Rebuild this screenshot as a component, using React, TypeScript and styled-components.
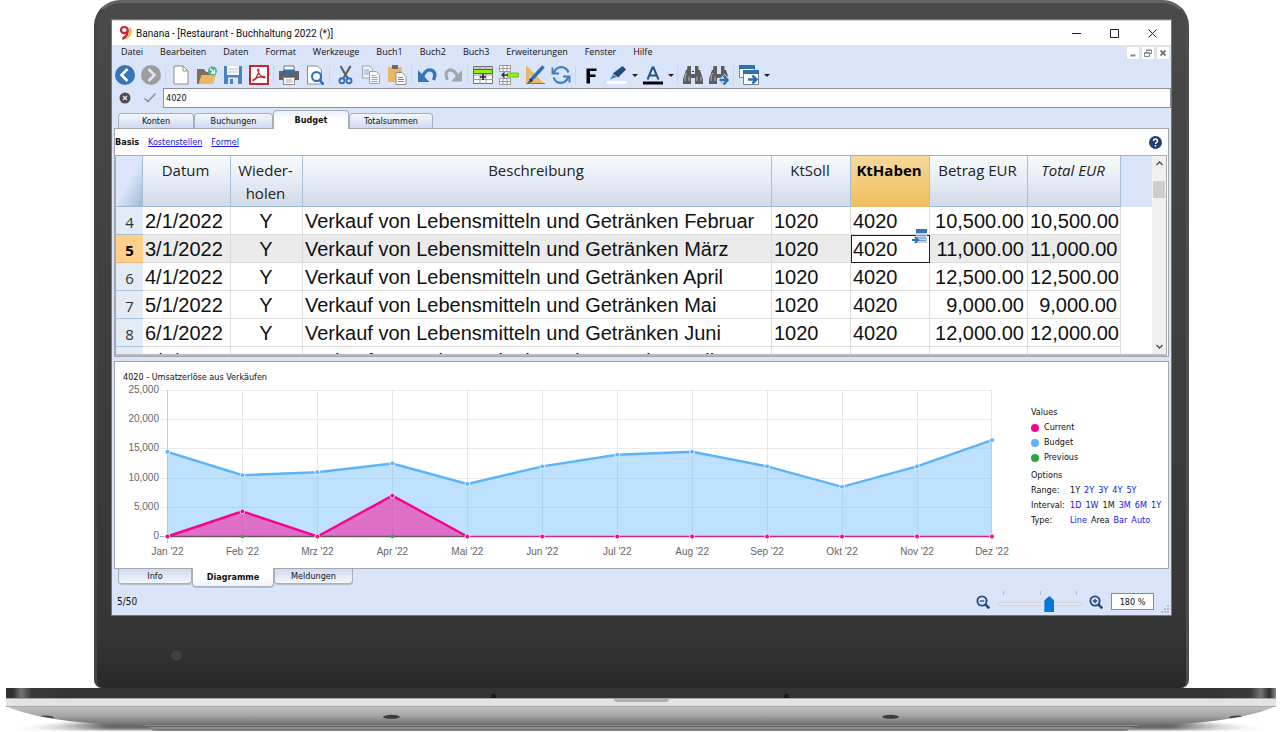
import React from "react";
import styled, { createGlobalStyle, css } from "styled-components";

const ui = `"DejaVu Sans Condensed", "DejaVu Sans", sans-serif`;
const menuFont = `"Open Sans", "Noto Sans", sans-serif`;
const arial = `"Liberation Sans", Arial, sans-serif`;
const blue = "#dae4f9";

const Global = createGlobalStyle`
  *, *::before, *::after { box-sizing: border-box; }
  body { margin: 0; background: #fff; color: #111; font: 9px/15px ${ui}; }
  button, input { font: inherit; color: inherit; margin: 0; padding: 0; }
  button { background: none; border: 0; }
  svg { display: block; flex: none; }
`;

const Laptop = styled.main`
  min-width: 1100px;
`;

const Lid = styled.div`
  margin: 0 91px 0 94px;
  padding: 17px 15px 0;
  border: 3px solid #5a5a5a;
  border-top-color: #646464;
  border-left-color: #444;
  border-right-color: #4e4e4e;
  border-bottom: 0;
  border-radius: 26px 26px 8px 8px;
  background: linear-gradient(#4a4a4a, #424242 30%, #373737 88%, #333 94%, #282828);
`;

const Chin = styled.div`
  height: 73px;
  padding: 34px 0 0 58px;
`;

const Camera = styled.div`
  width: 13px;
  height: 13px;
  border-radius: 50%;
  border: 1px solid #2c2c2c;
  background: #404040;
`;

const Screen = styled.section`
  background: ${blue};
  box-shadow: 0 0 0 1px #777;
`;

const TitleBar = styled.header`
  display: flex;
  align-items: center;
  height: 25px;
  padding-left: 6px;
  gap: 3px;
  background: #fff;
  border-top: 1px solid #d8d8d8;
`;

const AppTitle = styled.h1`
  flex: 1;
  margin: 0;
  font: 400 10px/15px Roboto, sans-serif;
`;

const WindowButtons = styled.div`
  display: flex;
`;

const WindowButton = styled.button`
  display: grid;
  place-items: center;
  width: 38px;
  height: 24px;
`;

const MenuBar = styled.nav`
  display: flex;
  align-items: flex-start;
  gap: 17px;
  height: 17px;
  padding-left: 9px;
  font-family: ${menuFont};
`;

const MenuButton = styled.button`
  line-height: 14px;
`;

const DocButtons = styled.div`
  display: flex;
  gap: 1px;
  margin: 1px 1px 0 auto;
`;

const DocButton = styled.button`
  display: grid;
  place-items: center;
  width: 14px;
  height: 14px;
  background: #fff;
  border: 1px solid #e2e2e2;
`;

const ToolBar = styled.div`
  display: flex;
  align-items: center;
  height: 26px;
`;

const ToolButton = styled.button<{ $narrow?: boolean }>`
  display: grid;
  place-items: center;
  width: ${(p) => (p.$narrow ? 10 : 26)}px;
  height: 26px;
`;

const Divider = styled.span`
  width: 1px;
  height: 20px;
  margin: 0 2px 0 1px;
  background: #d3d6dc;
`;

const FormulaBar = styled.div`
  display: flex;
  height: 20px;
`;

const FormulaButton = styled.button`
  display: grid;
  place-items: center;
  width: 25px;
  height: 20px;
`;

const FormulaInput = styled.input`
  flex: 1;
  min-width: 0;
  margin-left: 1px;
  padding: 1px 0 0 2px;
  border: 1px solid #8e9097;
  background: #fff;
  outline: 0;
`;

const TabStrip = styled.div<{ $bottom?: boolean }>`
  display: flex;
  align-items: ${(p) => (p.$bottom ? "flex-start" : "flex-end")};
  height: ${(p) => (p.$bottom ? 17 : 20)}px;
  padding-left: 6px;
`;

const Tab = styled.button<{ $w: number; $active?: boolean; $bottom?: boolean }>`
  position: relative;
  width: ${(p) => p.$w}px;
  height: ${(p) => (p.$active ? 19 : 15)}px;
  border: 1px solid #a9aeb8;
  line-height: 13px;
  ${(p) =>
    p.$bottom
      ? css`
          border-top: 0;
          border-radius: 0 0 4px 4px;
          background: linear-gradient(#cfdaf0, #f2f6fd);
          box-shadow: 0 1px 0 #b9bec8;
        `
      : css`
          border-bottom: 0;
          border-radius: 4px 4px 0 0;
          background: linear-gradient(#f4f7fd, #cfdbf3);
        `}
  ${(p) =>
    p.$active &&
    css`
      z-index: 1;
      margin-${p.$bottom ? "top" : "bottom"}: -1px;
      font-weight: 700;
      line-height: 18px;
      background: ${p.$bottom ? "linear-gradient(#fff 50%, #eef3fc)" : "linear-gradient(#eaf0fc, #fff 50%)"};
    `}
`;

const Panel = styled.section`
  margin: 0 2px;
  border: 1px solid #a3a6ab;
  background: #fff;
`;

const ViewRow = styled.div`
  display: flex;
  align-items: center;
  gap: 9px;
  height: 26px;
  padding: 1px 6px 0 0;
`;

const ViewLink = styled.a`
  color: #1414ee;
  text-decoration: underline;
`;

const HelpButton = styled.button`
  width: 13px;
  height: 13px;
  margin-left: auto;
`;

const GridFrame = styled.div`
  display: flex;
  height: 201px;
  margin-right: 1px;
  overflow: hidden;
  border: 1px solid #a9abae;
  border-bottom: 2px solid #b8b9bb;
`;

const GridArea = styled.div`
  flex: 1;
  min-width: 0;
`;

const Grid = styled.table`
  width: 100%;
  table-layout: fixed;
  border-collapse: separate;
  border-spacing: 0;
  font: 20px/25px ${arial};
  white-space: nowrap;
`;

const Head = styled.th<{ $on?: boolean; $italic?: boolean }>`
  height: 51px;
  padding: 3px 2px 0 0;
  vertical-align: top;
  font: ${(p) => (p.$on ? "700" : "400")} 15px/23px ${menuFont};
  font-style: ${(p) => (p.$italic ? "italic" : "normal")};
  white-space: normal;
  color: ${(p) => (p.$on ? "#000" : "#222")};
  background: ${(p) => (p.$on ? "linear-gradient(#f8da9c, #efbe5c)" : "linear-gradient(#f8fcfd, #d2dae8)")};
  border-right: 1px solid ${(p) => (p.$on ? "#f0b070" : "#a6bfd6")};
  border-bottom: 1px solid ${(p) => (p.$on ? "#efb878" : "#9db8d2")};
`;

const Corner = styled.td`
  background: linear-gradient(120deg, #dbe6fa 50%, #a2b9d3);
  border-right: 1px solid #a6bfd6;
  border-bottom: 1px solid #9db8d2;
`;

const Filler = styled.td<{ $head?: boolean }>`
  background: ${(p) => (p.$head ? blue : "#fff")};
`;

const RowHead = styled.th<{ $on?: boolean }>`
  height: 28px;
  padding: 4px 0 0;
  font: ${(p) => (p.$on ? "700" : "400")} 15px/23px ${menuFont};
  color: ${(p) => (p.$on ? "#000" : "#333")};
  background: ${(p) => (p.$on ? "#ffd08a" : "#e3ebf7")};
  border-bottom: 1px solid ${(p) => (p.$on ? "#f0b070" : "#a8c0da")};
`;

const Cell = styled.td<{ $align?: string; $on?: boolean }>`
  position: relative;
  height: 28px;
  padding: 2px 3px 0 2px;
  text-align: ${(p) => p.$align || "left"};
  background: ${(p) => (p.$on ? "#ebebeb" : "#fff")};
  border-right: 1px solid #dcdcdc;
  border-bottom: 1px solid #dcdcdc;
`;

const EditCell = styled(Cell)`
  padding: 1px 0 0 1px;
  background: #fff;
  border: 1px solid #222;
`;

const CellBadge = styled.button`
  position: absolute;
  top: -7px;
  right: 1px;
`;

const ScrollBar = styled.div`
  display: flex;
  flex-direction: column;
  width: 14px;
  background: #f0f0f0;
`;

const ScrollButton = styled.button`
  display: grid;
  place-items: center;
  height: 15px;
  color: #555;
`;

const ScrollTrack = styled.div`
  flex: 1;
  padding: 10px 1px 0;
`;

const ScrollThumb = styled.div`
  height: 17px;
  background: #cdcdcd;
`;

const ChartPanel = styled(Panel)`
  display: flex;
  margin-top: 4px;
`;

const ChartBody = styled.div`
  flex: 1;
  min-width: 0;
`;

const ChartTitle = styled.h2`
  margin: 0;
  padding: 8px 0 0 8px;
  height: 21px;
  font-size: 9px;
  font-weight: 400;
  line-height: 15px;
`;

const ChartSvg = styled.svg`
  width: 100%;
  height: auto;
  font: 10px ${arial};
  fill: #666;
`;

const Legend = styled.aside`
  width: 137px;
  padding-top: 43px;
`;

const LegendLine = styled.div`
  display: flex;
  align-items: center;
  height: 15px;
`;

const LegendHeading = styled(LegendLine)<{ $gap?: boolean }>`
  margin-top: ${(p) => (p.$gap ? 3 : 0)}px;
`;

const Dot = styled.span<{ $color: string }>`
  width: 8px;
  height: 8px;
  margin-right: 5px;
  border-radius: 50%;
  background: ${(p) => p.$color};
`;

const OptionName = styled.span`
  width: 39px;
`;

const Option = styled.a<{ $current?: boolean }>`
  margin-right: 4px;
  color: ${(p) => (p.$current ? "#111" : "#1414ee")};
  text-decoration: none;
`;

const StatusBar = styled.footer`
  display: flex;
  align-items: center;
  height: 29px;
  padding: 2px 1px 0 5px;
`;

const StatusText = styled.span`
  flex: 1;
  font-size: 10px;
`;

const ZoomButton = styled.button`
  width: 14px;
  height: 14px;
`;

const SliderBox = styled.div`
  width: 84px;
  margin: 0 7px 0 8px;
`;

const Ticks = styled.div`
  display: flex;
  justify-content: space-between;
  height: 5px;
  padding: 0 5px;
`;

const Tick = styled.i`
  width: 1px;
  height: 4px;
  background: #b5bac4;
`;

const Slider = styled.input`
  display: block;
  width: 100%;
  height: 16px;
  appearance: none;
  background: transparent;
  &::-webkit-slider-runnable-track {
    height: 4px;
    background: #e4e6ea;
    border: 1px solid #d3d6dc;
  }
  &::-webkit-slider-thumb {
    appearance: none;
    width: 10px;
    height: 16px;
    margin-top: -7px;
    background: #0078d7;
    clip-path: polygon(50% 0, 100% 28%, 100% 100%, 0 100%, 0 28%);
  }
`;

const ZoomInput = styled.input`
  width: 43px;
  height: 17px;
  margin: 0 7px 0 8px;
  text-align: center;
  background: #fff;
  border: 1px solid #888c94;
`;

const Base = styled.svg`
  width: 100%;
  height: 44px;
`;

/* ---------- toolbar drawings, 20 x 20 ---------- */

const icons: Record<string, React.ReactNode> = {
  back: (
    <>
      <circle cx="10" cy="10" r="10" fill="#3775b4" />
      <path d="M12.500 4 6.500 10l6 6" fill="none" stroke="#fff" strokeWidth="2.600" />
    </>
  ),
  forward: (
    <>
      <circle cx="10" cy="10" r="10" fill="#9d9d9d" />
      <path d="M7.500 4l6 6-6 6" fill="none" stroke="#dde4f2" strokeWidth="2.600" />
    </>
  ),
  file: (
    <>
      <path d="M3 1h9l5 5v13H3z" fill="#fff" stroke="#8d8d8d" />
      <path d="M12 1v5h5" fill="none" stroke="#8d8d8d" />
    </>
  ),
  folder: (
    <>
      <path d="M0 4h7l2 3h7v12H0z" fill="#7c6f60" />
      <path d="M4.500 10H19l-3 9H1.500z" fill="#ecb765" />
      <circle cx="15.500" cy="6" r="4.500" fill="#4cb48a" />
      <path d="m13 3.500 4 4M17.500 4.500V8H14" fill="none" stroke="#fff" strokeWidth="1.300" />
    </>
  ),
  save: (
    <>
      <path d="M1 1h18v18H1z" fill="#4a84c4" />
      <path d="M4 1h12v9H4z" fill="#f4f6fa" />
      <path d="M5 4h10M5 7h10" stroke="#c3c9d2" />
      <path d="M5 12.500h10V19H5z" fill="#e3e6ea" />
      <path d="M7 14h3v5H7z" fill="#4a84c4" />
    </>
  ),
  pdf: (
    <>
      <path d="M1 1h18v18H1z" fill="#fff" stroke="#c8242b" strokeWidth="2" />
      <path
        d="M4.500 15.500c2-1 5-6 5.300-10.300.1-1.600-1.300-1.400-1-.1.700 3.800 3.600 7 6.200 7.600 1.400.1 1.300-1.200-.2-1.300-3-.1-7 1.200-9.400 2.600-1.400.9-1.800 1.900-.9 1.500z"
        fill="none"
        stroke="#c8242b"
        strokeWidth="1.300"
      />
    </>
  ),
  print: (
    <>
      <path d="M5 1h10v5H5z" fill="#fff" stroke="#777" />
      <path d="M0 6h20v9h-4v-3H4v3H0z" fill="#626262" />
      <path d="M4.500 4.500h11v4h-11z" fill="#2f6fb0" />
      <path d="M4.500 12.500h11v7h-11z" fill="#fff" stroke="#888" />
      <path d="M6.500 15h7M6.500 17h7" stroke="#aaa" />
    </>
  ),
  preview: (
    <>
      <path d="M2.500 1h10l4 4v14h-14z" fill="#fff" stroke="#8d8d8d" />
      <circle cx="11.500" cy="11.500" r="4.500" fill="#eef5fc" stroke="#2f6fb0" strokeWidth="2" />
      <path d="m14.500 15 4 4.500" stroke="#2f6fb0" strokeWidth="2.600" />
    </>
  ),
  cut: (
    <>
      <path d="M5.500 1l7 12M15.500 1 8.500 13" stroke="#5b5f66" strokeWidth="2.200" />
      <circle cx="7" cy="15.800" r="2.500" fill="none" stroke="#2f6fb0" strokeWidth="1.900" />
      <circle cx="14" cy="15.800" r="2.500" fill="none" stroke="#2f6fb0" strokeWidth="1.900" />
    </>
  ),
  copy: (
    <>
      <path d="M1.500 1h7l3 3v9h-10z" fill="#eef2fa" stroke="#a0a5ae" />
      <path d="M3 5h5M3 7h6M3 9h6" stroke="#86acd4" />
      <path d="M8.500 6.500h7l3 3v9h-10z" fill="#f6f8fc" stroke="#a0a5ae" />
      <path d="M10.500 10.500h4M10.500 12.500h6M10.500 14.500h6M10.500 16.500h6" stroke="#86acd4" />
    </>
  ),
  paste: (
    <>
      <path d="M1 2h14v15H1z" fill="#ecb765" />
      <path d="M5 0h6v4H5z" fill="#6f6a62" />
      <path d="M9 7.500h6l4 4v8H9z" fill="#fff" stroke="#8d8d8d" />
      <path d="M11 12.500h5M11 14.500h6M11 16.500h6" stroke="#5c93c8" />
    </>
  ),
  undo: (
    <>
      <path d="M5 12.500C8 5 12 4 15.200 5.500c3 1.600 3.300 5 1.300 9.500" fill="none" stroke="#3775b4" strokeWidth="3.400" />
      <path d="M1 5v12h11.500L1 5z" fill="#3775b4" />
    </>
  ),
  redo: (
    <>
      <path d="M15 12.500C12 5 8 4 5.300 5.500c-3 1.600-2.800 5-.8 9.500" fill="none" stroke="#a2a5aa" strokeWidth="3" />
      <path d="M19 5v11.500H8z" fill="#a2a5aa" />
    </>
  ),
  addRow: (
    <>
      <path d="M.500 1.500h19v17H.500z" fill="#fff" stroke="#6e6e6e" />
      <path d="M0 3h20M0 14.500h20M7 1v18M13 1v18M0 10h20" stroke="#999" fill="none" />
      <path d="M.500 4.500h19v4H.500z" fill="#8df20c" stroke="#3e7c10" />
      <path d="M10 9v6M7 12h6" stroke="#222" strokeWidth="1.600" />
    </>
  ),
  insertRow: (
    <>
      <path d="M.500.5h11v6H.500zM.500 13.500h11v6H.500zM4 .5v6M8 .5v6M4 13.500v6M8 13.500v6M.500 3.500h11M.500 16.500h11" fill="#fff" stroke="#999" />
      <path d="M8.500 8h11v4h-11z" fill="#8df20c" stroke="#79b73a" />
      <path d="M3 10h6M5.500 7.500 3 10l2.500 2.500" stroke="#333" strokeWidth="1.400" fill="none" />
    </>
  ),
  design: (
    <>
      <path d="M1 0v19h18.500z" fill="#ecb765" />
      <path d="M5 10v5h5z" fill="#dbe5f9" />
      <path d="M1 18.500h19" stroke="#8b7350" />
      <path d="M18.500 1.500 5 16" stroke="#2f6fb0" strokeWidth="3.400" />
      <path d="m6 13-3.500 5.500L8 16z" fill="#24456f" />
    </>
  ),
  refresh: (
    <>
      <path d="M3 8.500a7.300 7.300 0 0 1 14.300-1M17 11.500a7.300 7.300 0 0 1-14.300 1" fill="none" stroke="#3f7fbc" strokeWidth="2.300" />
      <path d="M1.500 2.500v6H8M18.500 17.500v-6H12" fill="none" stroke="#3f7fbc" strokeWidth="2" />
    </>
  ),
  bold: <path d="M5.500 3.500h10V6H9v3.500h5.500V12H9v6.500H5.500z" fill="#000" />,
  pen: (
    <>
      <path d="M0 16h20v3H0z" fill="#fff" />
      <path d="m15.500 2 2.500 2.500-7 7-4-3z" fill="#254a7c" stroke="#254a7c" strokeWidth="1.500" />
      <path d="M6 9.500 3 14.500 9.500 12z" fill="#3f7fbc" />
    </>
  ),
  fontColor: (
    <>
      <path d="M0 16.500h20v3H0z" fill="#000" />
      <path d="M4.500 14.500 9.500 2.500h1l5 12M6.500 10.500h7.500" fill="none" stroke="#2b5287" strokeWidth="2" />
    </>
  ),
  find: (
    <>
      <path d="M3 5h5v4h4V5h5l3 9v5h-8v-6H8v6H0v-5z" fill="#5d5d5d" />
      <path d="M4.500 1H8v4H4zM12 1h3.500v4H12z" fill="#5d5d5d" />
      <path d="M2 16v-4l1.500-4M14 16v-4.500M6 16v-4.500M18 16v-4" stroke="#b4b8c0" fill="none" />
      <path d="M9 6.500h2" stroke="#333" />
    </>
  ),
  findNext: (
    <>
      <path d="M3 5h5v4h4V5h5l2 6-5 7h-2v-5H8v6H0v-5z" fill="#5d5d5d" />
      <path d="M4.500 1H8v4H4zM12 1h3.500v4H12z" fill="#5d5d5d" />
      <path d="M2 16v-4l1.500-4M6 16v-4.500" stroke="#b4b8c0" fill="none" />
      <path d="M9.500 15h8M14 10.500l4.500 4.500-4.500 4.500" stroke="#dae4f9" strokeWidth="4.500" fill="none" />
      <path d="M10.500 15h8M14.500 10.500l4 4.500-4 4.500" stroke="#2f6fb0" strokeWidth="2.600" fill="none" />
    </>
  ),
  windows: (
    <>
      <path d="M.500 1.500h15v11H.500z" fill="#fff" stroke="#76808e" />
      <path d="M0 0h16v4H0z" fill="#2f6fb0" />
      <path d="M4.500 6.500h15v13h-15z" fill="#fff" stroke="#76808e" />
      <path d="M4 5h16v4H4z" fill="#2f6fb0" />
      <path d="M9 14.500h8M13.500 10.500l4 4-4 4" stroke="#2f6fb0" strokeWidth="2.500" fill="none" />
    </>
  ),
};

type Tool = [string, string] | "divider" | "drop";
const tools: Tool[] = [
  ["back", "Zurück"], ["forward", "Vorwärts"], "divider",
  ["file", "Neu"], ["folder", "Öffnen"], ["save", "Speichern"], ["pdf", "PDF"], "divider",
  ["print", "Drucken"], ["preview", "Seitenansicht"], "divider",
  ["cut", "Ausschneiden"], ["copy", "Kopieren"], ["paste", "Einfügen"], "divider",
  ["undo", "Rückgängig"], ["redo", "Wiederherstellen"], "divider",
  ["addRow", "Zeile hinzufügen"], ["insertRow", "Zeile einfügen"], ["design", "Spalten"], ["refresh", "Neu berechnen"], "divider",
  ["bold", "Fett"], ["pen", "Hintergrundfarbe"], "drop", ["fontColor", "Textfarbe"], "drop", "divider",
  ["find", "Suchen"], ["findNext", "Weitersuchen"], "divider",
  ["windows", "Fenster wechseln"], "drop",
];

const menus = ["Datei", "Bearbeiten", "Daten", "Format", "Werkzeuge", "Buch1", "Buch2", "Buch3", "Erweiterungen", "Fenster", "Hilfe"];

const rows = [
  [4, "2/1/2022", "Februar", "10,500.00"],
  [5, "3/1/2022", "März", "11,000.00"],
  [6, "4/1/2022", "April", "12,500.00"],
  [7, "5/1/2022", "Mai", "9,000.00"],
  [8, "6/1/2022", "Juni", "12,000.00"],
  [9, "7/1/2022", "Juli", "14,000.00"],
] as const;

const columnWidths = [27, 88, 72, 0, 79, 79, 98, 93, 31];

const months = ["Jan", "Feb", "Mrz", "Apr", "Mai", "Jun", "Jul", "Aug", "Sep", "Okt", "Nov", "Dez"];
const budget = [14500, 10500, 11000, 12500, 9000, 12000, 14000, 14500, 12000, 8500, 12000, 16500];
const current = [0, 4300, 0, 7000, 0, 0, 0, 0, 0, 0, 0, 0];

const px = (i: number) => 52.5 + i * 74.95;
const py = (v: number) => 153.5 - (v * 146) / 25000;
const line = (data: number[]) => data.map((v, i) => `${px(i)},${py(v)}`).join(" ");
const area = (data: number[]) => `${px(0)},${py(0)} ${line(data)} ${px(11)},${py(0)}`;

function Chart() {
  return (
    <ChartSvg viewBox="0 0 916 185" role="img" aria-label="Umsatzerlöse aus Verkäufen">
      {[0, 5000, 10000, 15000, 20000, 25000].map((v) => (
        <g key={v}>
          <path d={`M45 ${Math.floor(py(v)) + 0.5}H${px(11)}`} stroke={v ? "#ebebeb" : "#aaa"} />
          <text x="44" y={Math.floor(py(v)) + 3} textAnchor="end">
            {v.toLocaleString("en-US")}
          </text>
        </g>
      ))}
      {months.map((m, i) => (
        <g key={m}>
          <path d={`M${Math.floor(px(i)) + 0.5} 7V160`} stroke={i ? "#e6e6e6" : "#cbcbcb"} />
          <text x={px(i)} y="172" textAnchor="middle">{`${m} '22`}</text>
        </g>
      ))}
      <polygon points={area(budget)} fill="#5bb4ff" fillOpacity="0.400" />
      <polyline points={line(budget)} fill="none" stroke="#5bb4fb" strokeWidth="2.400" />
      <polygon points={area(current)} fill="#ff0090" fillOpacity="0.500" />
      <path d={`M${px(0)} 153.500H${px(4)}`} stroke="#6d5560" strokeWidth="1.500" />
      <polyline points={line([0, 4300, 0, 7000, 0])} fill="none" stroke="#fb0090" strokeWidth="2.400" />
      <path d={`M${px(4)} 153.500H${px(11)}`} stroke="#d4207f" strokeWidth="1.600" />
      {budget.map((v, i) => (
        <circle key={i} cx={px(i)} cy={py(v)} r="2.400" fill="#5bb4fb" stroke="#fff" strokeWidth="0.800" />
      ))}
      {[1, 3].map((i) => (
        <circle key={i} cx={px(i)} cy={153.5} r="1.800" fill="#27a83c" />
      ))}
      {current.map((v, i) => (
        <circle key={i} cx={px(i)} cy={py(v)} r="2.400" fill="#fb0090" stroke="#fff" strokeWidth="0.800" />
      ))}
    </ChartSvg>
  );
}

function LaptopBase() {
  return (
    <Base viewBox="0 0 1280 44" preserveAspectRatio="none" aria-hidden="true">
      <defs>
        <linearGradient id="edge">
          <stop offset="0" stopColor="#333" />
          <stop offset="0.005" stopColor="#2e2e2e" />
          <stop offset="0.012" stopColor="#747474" />
          <stop offset="0.02" stopColor="#3a3a3a" />
          <stop offset="0.05" stopColor="#333" />
          <stop offset="0.95" stopColor="#333" />
          <stop offset="0.98" stopColor="#3a3a3a" />
          <stop offset="0.988" stopColor="#747474" />
          <stop offset="0.995" stopColor="#2e2e2e" />
          <stop offset="1" stopColor="#888" />
        </linearGradient>
        <linearGradient id="belly" x1="0" y1="0" x2="0" y2="1">
          <stop offset="0" stopColor="#c4c4c4" />
          <stop offset="0.5" stopColor="#a6a6a6" />
          <stop offset="1" stopColor="#6e6e6e" />
        </linearGradient>
        <linearGradient id="shadow">
          <stop offset="0" stopColor="#fff" stopOpacity="0" />
          <stop offset="0.08" stopColor="#666" />
          <stop offset="0.92" stopColor="#666" />
          <stop offset="1" stopColor="#fff" stopOpacity="0" />
        </linearGradient>
        <filter id="soft" x="-5%" y="-50%" width="110%" height="200%">
          <feGaussianBlur stdDeviation="6 1.500" />
        </filter>
      </defs>
      <path d="M5 42C30 38 60 34 140 33H1140C1220 34 1250 38 1275 42z" fill="url(#shadow)" filter="url(#soft)" />
      <path d="M6 18h1270C1250 30 1200 37 1138 37H144C82 37 32 30 6 18z" fill="url(#belly)" />
      <path d="M142 37h998l-16 5.500H158z" fill="#8d8d8d" />
      <path d="M144 38.500h992M152 42h976" stroke="#606060" />
      <path d="M0 43h1280v1H0z" fill="#fff" />
      <path d="M6 0h1270v10H6z" fill="url(#edge)" />
      <path d="M6 10h1270v9H6z" fill="#e3e3e3" />
      <path d="M6 10.500h1270M6 18.500h1270" stroke="#a7a7a7" />
      <path d="M614 11h55q0 3-3 3h-49q-3 0-3-3z" fill="#b0b0b0" />
      <path d="M491 10a2.500 4 0 0 1 5 0zM784 10a2.500 4 0 0 1 5 0z" fill="#161616" />
      <ellipse cx="391.500" cy="28.800" rx="8.500" ry="2" fill="#3c3c3c" />
      <ellipse cx="890.500" cy="28.800" rx="8.500" ry="2" fill="#3c3c3c" />
      <path d="M40 28.500q4-1.500 11-.5 4 .5 2 2.300zM1243 28.500q-4-1.500-11-.5-4 .5-2 2.300z" fill="#444" />
    </Base>
  );
}

function Zoom({ plus }: { plus?: boolean }) {
  return (
    <svg width="14" height="14" viewBox="0 0 14 14" fill="none" stroke="#274a7c">
      <circle cx="6" cy="6" r="4.600" strokeWidth="1.900" />
      <path d="m9.300 9.300 4 4" strokeWidth="2.600" />
      <path d={plus ? "M3.800 6h4.400M6 3.800v4.400" : "M3.800 6h4.400"} strokeWidth="1.300" />
    </svg>
  );
}

export default function App() {
  return (
    <Laptop>
      <Global />
      <Lid>
        <Screen>
          <TitleBar>
            <svg width="15" height="16" viewBox="0 0 15 16">
              <path d="M12 2.500c3 5 .5 11.500-8 12 5-2 8-5.500 8-12z" fill="#f4d34c" stroke="#b98c1c" strokeWidth="0.600" />
              <path d="M9.800 5.300C9.800 9 3 9.300 3 5.200 3 1 9.800.8 9.800 5.300c0 4-1.800 6.700-5.300 8.200" fill="none" stroke="#cf1f33" strokeWidth="2.200" />
            </svg>
            <AppTitle>Banana - [Restaurant - Buchhaltung 2022 (*)]</AppTitle>
            <WindowButtons>
              <WindowButton aria-label="Minimieren">
                <svg width="9" height="9"><path d="M0 4.500h9" stroke="#222" /></svg>
              </WindowButton>
              <WindowButton aria-label="Maximieren">
                <svg width="9" height="9"><path d="M.5.5h8v8h-8z" stroke="#222" fill="none" /></svg>
              </WindowButton>
              <WindowButton aria-label="Schliessen">
                <svg width="9" height="9"><path d="m.5.5 8 8m0-8-8 8" stroke="#222" /></svg>
              </WindowButton>
            </WindowButtons>
          </TitleBar>

          <MenuBar>
            {menus.map((m) => (
              <MenuButton key={m}>{m}</MenuButton>
            ))}
            <DocButtons>
              <DocButton aria-label="Dokument minimieren">
                <svg width="8" height="8"><path d="M1.500 6.500h5" stroke="#7b8795" strokeWidth="2" /></svg>
              </DocButton>
              <DocButton aria-label="Dokument wiederherstellen">
                <svg width="8" height="8" fill="none" stroke="#7b8795">
                  <path d="M2.500 2.500V1h5v3.500H6M.5 3.500h5v4h-5zM.5 4.200h5M2.500 1.500h5" />
                </svg>
              </DocButton>
              <DocButton aria-label="Dokument schliessen">
                <svg width="8" height="8"><path d="m1.500 1.500 5 5m0-5-5 5" stroke="#6b7887" strokeWidth="1.800" /></svg>
              </DocButton>
            </DocButtons>
          </MenuBar>

          <ToolBar role="toolbar">
            {tools.map((t, i) =>
              t === "divider" ? (
                <Divider key={i} />
              ) : t === "drop" ? (
                <ToolButton key={i} $narrow aria-label="Auswahl">
                  <svg width="6" height="3"><path d="M0 0h6L3 3z" fill="#222" /></svg>
                </ToolButton>
              ) : (
                <ToolButton key={i} aria-label={t[1]}>
                  <svg width="20" height="20" viewBox="0 0 20 20">{icons[t[0]]}</svg>
                </ToolButton>
              )
            )}
          </ToolBar>

          <FormulaBar>
            <FormulaButton aria-label="Abbrechen">
              <svg width="12" height="12">
                <circle cx="6" cy="6" r="5.500" fill="#4c4c4c" />
                <path d="m4 4 4 4m0-4-4 4" stroke="#e8e8e8" strokeWidth="1.400" />
              </svg>
            </FormulaButton>
            <FormulaButton aria-label="Bestätigen">
              <svg width="12" height="10"><path d="m.5 5.500 3.500 3 7.500-8" fill="none" stroke="#8d9097" strokeWidth="1.500" /></svg>
            </FormulaButton>
            <FormulaInput aria-label="Zellinhalt" defaultValue="4020" />
          </FormulaBar>

          <TabStrip>
            <Tab $w={76}>Konten</Tab>
            <Tab $w={79}>Buchungen</Tab>
            <Tab $w={76} $active>Budget</Tab>
            <Tab $w={84}>Totalsummen</Tab>
          </TabStrip>

          <Panel>
            <ViewRow>
              <b>Basis</b>
              <ViewLink href="#kostenstellen">Kostenstellen</ViewLink>
              <ViewLink href="#formel">Formel</ViewLink>
              <HelpButton aria-label="Hilfe">
                <svg width="13" height="13" fill="none">
                  <circle cx="6.500" cy="6.500" r="6.500" fill="#21406e" />
                  <path d="M4.500 5c0-2.600 4-2.600 4 0 0 1.400-2 1.400-2 3M6.500 9v1.500" stroke="#fff" strokeWidth="1.500" />
                </svg>
              </HelpButton>
            </ViewRow>
            <GridFrame>
              <GridArea>
                <Grid>
                  <colgroup>
                    {columnWidths.map((w, i) => (
                      <col key={i} width={w || undefined} />
                    ))}
                  </colgroup>
                  <thead>
                    <tr>
                      <Corner />
                      <Head>Datum</Head>
                      <Head>Wieder-<br />holen</Head>
                      <Head>Beschreibung</Head>
                      <Head>KtSoll</Head>
                      <Head $on>KtHaben</Head>
                      <Head>Betrag EUR</Head>
                      <Head $italic>Total EUR</Head>
                      <Filler $head />
                    </tr>
                  </thead>
                  <tbody>
                    {rows.map(([n, date, month, amount]) => {
                      const on = n === 5;
                      return (
                        <tr key={n}>
                          <RowHead scope="row" $on={on}>{n}</RowHead>
                          <Cell $on={on}>{date}</Cell>
                          <Cell $on={on} $align="center">Y</Cell>
                          <Cell $on={on}>Verkauf von Lebensmitteln und Getränken {month}</Cell>
                          <Cell $on={on}>1020</Cell>
                          {on ? (
                            <EditCell>
                              4020
                              <CellBadge aria-label="Konto auswählen">
                                <svg width="16" height="15" viewBox="0 0 16 15">
                                  <path d="M4 1h11v13H4z" fill="#c4d3e6" />
                                  <path d="M4 0h11v4H4z" fill="#3775b4" />
                                  <path d="M5 6.500h9M5 9h9M5 11.500h9" stroke="#6f9dcb" />
                                  <path d="M0 11h5M3 8l3 3-3 3" stroke="#2f6fb0" strokeWidth="1.800" fill="none" />
                                </svg>
                              </CellBadge>
                            </EditCell>
                          ) : (
                            <Cell>4020</Cell>
                          )}
                          <Cell $on={on} $align="right">{amount}</Cell>
                          <Cell $on={on} $align="right">{amount}</Cell>
                          <Filler />
                        </tr>
                      );
                    })}
                  </tbody>
                </Grid>
              </GridArea>
              <ScrollBar>
                <ScrollButton aria-label="Nach oben">
                  <svg width="7" height="5"><path d="m.5 4 3-3 3 3" fill="none" stroke="currentColor" strokeWidth="1.500" /></svg>
                </ScrollButton>
                <ScrollTrack><ScrollThumb /></ScrollTrack>
                <ScrollButton aria-label="Nach unten">
                  <svg width="7" height="5"><path d="m.5 1 3 3 3-3" fill="none" stroke="currentColor" strokeWidth="1.500" /></svg>
                </ScrollButton>
              </ScrollBar>
            </GridFrame>
          </Panel>

          <ChartPanel>
            <ChartBody>
              <ChartTitle>4020 - Umsatzerlöse aus Verkäufen</ChartTitle>
              <Chart />
            </ChartBody>
            <Legend>
              <LegendHeading>Values</LegendHeading>
              <LegendLine><Dot $color="#fb0090" />Current</LegendLine>
              <LegendLine><Dot $color="#5bb4fb" />Budget</LegendLine>
              <LegendLine><Dot $color="#27a83c" />Previous</LegendLine>
              <LegendHeading $gap>Options</LegendHeading>
              {([
                ["Range:", ["1Y", "2Y", "3Y", "4Y", "5Y"], "1Y"],
                ["Interval:", ["1D", "1W", "1M", "3M", "6M", "1Y"], "1M"],
                ["Type:", ["Line", "Area", "Bar", "Auto"], "Area"],
              ] as [string, string[], string][]).map(([name, values, chosen]) => (
                <LegendLine key={name}>
                  <OptionName>{name}</OptionName>
                  {values.map((v) => (
                    <Option key={v} href={`#${v}`} $current={v === chosen}>{v}</Option>
                  ))}
                </LegendLine>
              ))}
            </Legend>
          </ChartPanel>

          <TabStrip $bottom>
            <Tab $bottom $w={74}>Info</Tab>
            <Tab $bottom $w={82} $active>Diagramme</Tab>
            <Tab $bottom $w={79}>Meldungen</Tab>
          </TabStrip>

          <StatusBar>
            <StatusText>5/50</StatusText>
            <ZoomButton aria-label="Verkleinern"><Zoom /></ZoomButton>
            <SliderBox>
              <Ticks><Tick /><Tick /><Tick /></Ticks>
              <Slider type="range" min={0} max={100} defaultValue={63} aria-label="Zoom" />
            </SliderBox>
            <ZoomButton aria-label="Vergrössern"><Zoom plus /></ZoomButton>
            <ZoomInput aria-label="Zoomfaktor" defaultValue="180 %" />
            <svg width="9" height="22" fill="#b9bdc6">
              <path d="M6 14h2v2H6zM3 17h2v2H3zM6 17h2v2H6zM0 20h2v2H0zM3 20h2v2H3zM6 20h2v2H6z" />
            </svg>
          </StatusBar>
        </Screen>
        <Chin><Camera /></Chin>
      </Lid>
      <LaptopBase />
    </Laptop>
  );
}
